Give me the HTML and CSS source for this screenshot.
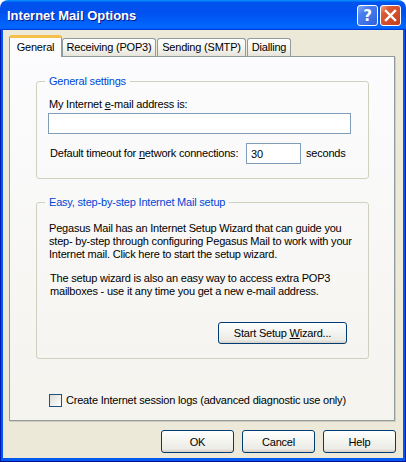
FILE: index.html
```html
<!DOCTYPE html>
<html lang="en">
<head>
    <meta charset="UTF-8">
    <meta name="viewport" content="width=device-width, initial-scale=1.0">
    <title>Internet Mail Options</title>
    <link rel="stylesheet" href="styles.css">
</head>
<body>
    <div class="window">
        <div class="titlebar">
            <span class="title">Internet Mail Options</span>
            <div class="title-buttons">
                <button class="tb-btn help">?</button>
                <button class="tb-btn close">
                    <svg width="19" height="19" viewBox="0 0 19 19">
                        <path d="M5 5 L14 14 M14 5 L5 14" stroke="#fff" stroke-width="2.4" stroke-linecap="square"/>
                    </svg>
                </button>
            </div>
        </div>

        <div class="frame">
            <div class="client">
                <div class="tabs">
                    <div class="tab active">General</div>
                    <div class="tab tab-pop3">Receiving (POP3)</div>
                    <div class="tab tab-smtp">Sending (SMTP)</div>
                    <div class="tab tab-dial">Dialling</div>
                </div>

                <div class="panel">
                    <fieldset class="group group-general">
                        <legend>General settings</legend>
                        <label class="field-label">My Internet <u>e</u>-mail address is:</label>
                        <input class="text-input email-input" type="text">
                        <div class="timeout-row">
                            <span class="timeout-label">Default timeout for <u>n</u>etwork connections:</span>
                            <input class="text-input timeout-input" type="text" value="30">
                            <span class="unit">seconds</span>
                        </div>
                    </fieldset>

                    <fieldset class="group group-wizard">
                        <legend>Easy, step-by-step Internet Mail setup</legend>
                        <p class="wizard-text">Pegasus Mail has an Internet Setup Wizard that can guide you<br>
                        step- by-step through configuring Pegasus Mail to work with your<br>
                        Internet mail. Click here to start the setup wizard.</p>
                        <p class="wizard-text second">The setup wizard is also an easy way to access extra POP3<br>
                        mailboxes - use it any time you get a new e-mail address.</p>
                        <button class="btn wizard-btn">Start Setup <u>W</u>izard...</button>
                    </fieldset>

                    <label class="check-row">
                        <span class="checkbox"></span>
                        <span>Create Internet session logs (advanced diagnostic use only)</span>
                    </label>
                </div>

                <div class="actions">
                    <button class="btn">OK</button>
                    <button class="btn">Cancel</button>
                    <button class="btn">Help</button>
                </div>
            </div>
        </div>
    </div>
</body>
</html>
```

FILE: styles.css
```css
/* Reset */
body, p, fieldset, legend, button, input {
    margin: 0;
    padding: 0;
}

body {
    background: #ffffff;
    font-family: "Liberation Sans", Arial, sans-serif;
    font-size: 11px;
    letter-spacing: -0.2px;
    color: #000;
    overflow: hidden;
}

/* Window shell */
.window {
    width: 406px;
    height: 462px;
    display: flex;
    flex-direction: column;
    border-radius: 8px 8px 0 0;
    overflow: hidden;
    white-space: nowrap;
}

.titlebar {
    height: 30px;
    flex: none;
    display: flex;
    align-items: center;
    justify-content: space-between;
    padding: 0 5px 0 7px;
    box-sizing: border-box;
    background: linear-gradient(180deg, #0997ff, #0053ee 8%, #0050ee 40%, #0066ff 88%, #0066ff 93%, #005bff 95%, #003dd7 96%, #003dd7);
}

.title {
    color: #fff;
    font-weight: bold;
    font-size: 13px;
    letter-spacing: 0;
    text-shadow: 1px 1px 0 #0a1883;
    padding-top: 1px;
}

.title-buttons {
    display: flex;
    gap: 2px;
    padding-top: 1px;
}

.tb-btn {
    width: 21px;
    height: 21px;
    box-sizing: border-box;
    border: 1px solid #fff;
    border-radius: 3px;
    display: flex;
    align-items: center;
    justify-content: center;
    color: #fff;
}

.tb-btn.help {
    background: linear-gradient(135deg, #8aaaf6 0%, #4b7fee 30%, #2e62dc 100%);
    font-weight: bold;
    font-size: 15px;
    font-family: "DejaVu Sans", sans-serif;
}

.tb-btn.close {
    background: linear-gradient(135deg, #f3a688 0%, #dc5a35 25%, #c43d1d 100%);
}

.frame {
    flex: 1;
    display: flex;
    background: #0058ee;
    border-left: 1px solid #0019b0;
    border-right: 1px solid #0019b0;
    border-bottom: 1px solid #001090;
    padding: 0 2px 3px;
}

.client {
    flex: 1;
    display: flex;
    flex-direction: column;
    background: #ece9d8;
    padding: 5px 8px 0 6px;
}

/* Tabs */
.tabs {
    height: 21px;
    display: flex;
    align-items: flex-end;
    position: relative;
    z-index: 1;
}

.tab {
    height: 18px;
    box-sizing: border-box;
    margin-left: 1px;
    border: 1px solid #919b9c;
    border-bottom: none;
    border-radius: 3px 3px 0 0;
    background: linear-gradient(180deg, #ffffff, #f3f3ef 60%, #e6e4da);
    text-align: center;
    line-height: 17px;
}

.tab.active {
    width: 53px;
    height: 22px;
    margin: 0 0 -1px 0;
    border-top: 3px solid #f4c04a;
    border-color: #f4c04a #919b9c #919b9c;
    background: #fcfcfe;
    line-height: 18px;
}

.tab.active + .tab {
    margin-left: 0;
}

.tab-pop3 { width: 94px; }
.tab-smtp { width: 89px; }
.tab-dial { width: 44px; }

/* Tab panel */
.panel {
    height: 365px;
    flex: none;
    box-sizing: border-box;
    border: 1px solid #919b9c;
    box-shadow: 1px 1px 0 #d0cdbd;
    background: linear-gradient(180deg, #fcfcfe, #f4f3ee);
    padding: 0 25px 0 26px;
}

.group {
    width: 333px;
    box-sizing: border-box;
    border: 1px solid #d0d0bf;
    border-radius: 3px;
    padding: 10px 17px 14px 11px;
    min-width: 0;
}

.group legend {
    color: #0046d5;
    padding: 0 4px;
    margin-left: -3px;
    line-height: 13px;
}

.group-general {
    margin-top: 18px;
}

.group-wizard {
    margin-top: 17px;
    padding-top: 13px;
}

.field-label {
    display: block;
    line-height: 13px;
    margin-left: 1px;
}

.text-input {
    box-sizing: border-box;
    height: 21px;
    border: 1px solid #7f9db9;
    background: #fff;
    font: inherit;
    letter-spacing: inherit;
    padding: 0 4px;
    outline: none;
}

.email-input {
    display: block;
    width: 303px;
    margin-top: 2px;
}

.timeout-row {
    display: flex;
    align-items: center;
    margin-top: 9px;
    line-height: 13px;
}

.timeout-label {
    width: 196px;
    margin-left: 2px;
}

.timeout-input {
    width: 55px;
}

.unit {
    margin-left: 5px;
}

.wizard-text {
    line-height: 13px;
    margin-left: 1px;
}

.wizard-text.second {
    margin-top: 11px;
    margin-left: 2px;
}

/* Push buttons */
.btn {
    width: 73px;
    height: 23px;
    box-sizing: border-box;
    border: 1px solid #003c74;
    border-radius: 3px;
    background: linear-gradient(180deg, #ffffff, #f3f3ef 50%, #ecebe6 85%, #d6d0c5);
    font: inherit;
    letter-spacing: inherit;
    color: #000;
}

.wizard-btn {
    display: block;
    width: 129px;
    height: 22px;
    margin: 24px 4px 0 auto;
}

/* Checkbox */
.check-row {
    display: flex;
    align-items: center;
    gap: 4px;
    margin: 35px 0 0 13px;
    line-height: 13px;
}

.checkbox {
    width: 13px;
    height: 13px;
    flex: none;
    box-sizing: border-box;
    border: 1px solid #1c5180;
    background: linear-gradient(135deg, #dcdcd7, #ffffff);
}

/* Dialog buttons */
.actions {
    display: flex;
    justify-content: flex-end;
    gap: 8px;
    margin: 9px -1px 0 0;
}
```
